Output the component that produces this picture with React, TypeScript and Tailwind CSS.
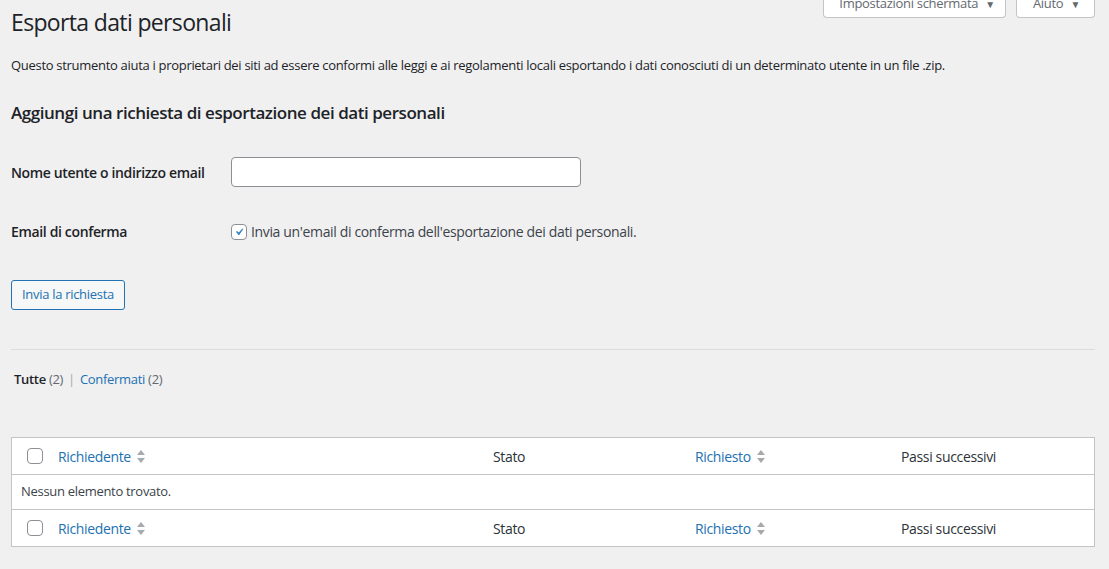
import { useState } from "react";

function SortIcon() {
	return (
		<svg width="8" height="15" viewBox="0 0 8 15" className="ml-[6px] shrink-0">
			<path d="M0 6 L4 1 L8 6 Z" fill="#a7aaad" />
			<path d="M0 9 L4 14 L8 9 Z" fill="#a7aaad" />
		</svg>
	);
}

function Checkbox({ checked = false }: { checked?: boolean }) {
	return (
		<span className="inline-flex h-4 w-4 shrink-0 items-center justify-center rounded-[4px] border border-[#8c8f94] bg-white">
			{checked && (
				<svg width="16" height="16" viewBox="0 0 20 20">
					<path d="M14.83 4.89l1.34.94-5.81 8.38H9.02L5.78 9.67l1.34-1.25 2.57 2.4z" fill="#3582c4" />
				</svg>
			)}
		</span>
	);
}

function HeaderRow() {
	return (
		<div className="grid h-[36px] grid-cols-[39px_435px_202px_206px_1fr] items-center text-[14px] tracking-[-0.35px]">
			<div className="pl-[15px] flex items-center">
				<Checkbox />
			</div>
			<a href="#" className="pl-[7px] flex items-center text-[#2271b1]">
				Richiedente
				<SortIcon />
			</a>
			<div className="pl-[7px] text-[#2c3338]">Stato</div>
			<a href="#" className="pl-[7px] flex items-center text-[#2271b1]">
				Richiesto
				<SortIcon />
			</a>
			<div className="pl-[7px] text-[#2c3338]">Passi successivi</div>
		</div>
	);
}

export default function App() {
	const [sendEmail, setSendEmail] = useState(true);

	return (
		<div className="min-h-screen bg-[#f0f0f1] font-['Open_Sans',sans-serif] text-[13px] tracking-[-0.3px] text-[#3c434a] px-[11px] pr-[14px]">
			{/* Header */}
			<div className="flex items-start justify-between">
				<h1 className="mt-[7px] text-[23px] leading-[30px] font-normal tracking-[-0.65px] text-[#1d2327]">Esporta dati personali</h1>
				<div className="mt-[-10px] flex gap-[10px]">
					<button className="h-[28px] rounded-b-[4px] border border-t-0 border-[#c3c4c7] bg-white pl-[15px] pr-[10px] text-[13px] text-[#646970]">
						Impostazioni schermata <span className="ml-[4px] text-[10px]">▼</span>
					</button>
					<button className="h-[28px] rounded-b-[4px] border border-t-0 border-[#c3c4c7] bg-white pl-[16px] pr-[14px] text-[13px] text-[#646970]">
						Aiuto <span className="ml-[4px] text-[10px]">▼</span>
					</button>
				</div>
			</div>

			<p className="mt-[19px] leading-[19px] text-[#1d2327]">
				Questo strumento aiuta i proprietari dei siti ad essere conformi alle leggi e ai regolamenti locali esportando i dati conosciuti di un determinato utente in un file .zip.
			</p>

			<h2 className="mt-[26px] text-[17px] leading-[24px] font-semibold tracking-[-0.45px] text-[#1d2327]">
				Aggiungi una richiesta di esportazione dei dati personali
			</h2>

			{/* Form */}
			<div className="mt-[32px] flex items-center">
				<label className="w-[220px] text-[14px] font-semibold tracking-[-0.35px] text-[#1d2327]">Nome utente o indirizzo email</label>
				<input type="text" className="h-[30px] w-[350px] rounded-[4px] border border-[#8c8f94] bg-white px-2 outline-none" />
			</div>
			<div className="mt-[34px] flex items-center">
				<div className="w-[220px] text-[14px] font-semibold tracking-[-0.35px] text-[#1d2327]">Email di conferma</div>
				<label className="flex items-center gap-[4px] text-[14px] tracking-[-0.35px] text-[#3c434a]" onClick={() => setSendEmail(!sendEmail)}>
					<Checkbox checked={sendEmail} />
					Invia un'email di conferma dell'esportazione dei dati personali.
				</label>
			</div>

			<button className="mt-[38px] h-[30px] rounded-[3px] border border-[#2271b1] bg-[#f6f7f7] px-[10px] text-[13px] text-[#2271b1]">
				Invia la richiesta
			</button>

			<hr className="mt-[39px] border-0 border-t border-[#dcdcde]" />

			{/* Views */}
			<div className="mt-[19px] ml-[3px] flex items-center leading-[20px] text-[13px] text-[#646970]">
				<span className="font-semibold text-[#1d2327]">Tutte</span>
				<span className="ml-[3px]">(2)</span>
				<span className="mx-[5px] text-[#a7aaad]">|</span>
				<a href="#" className="text-[#2271b1]">Confermati</a>
				<span className="ml-[3px]">(2)</span>
			</div>

			{/* Table */}
			<div className="mt-[48px] border border-[#c3c4c7] bg-white">
				<HeaderRow />
				<div className="flex h-[36px] items-center border-y border-[#c3c4c7] pl-[9px] text-[13px] text-[#3c434a]">
					Nessun elemento trovato.
				</div>
				<HeaderRow />
			</div>
		</div>
	);
}
